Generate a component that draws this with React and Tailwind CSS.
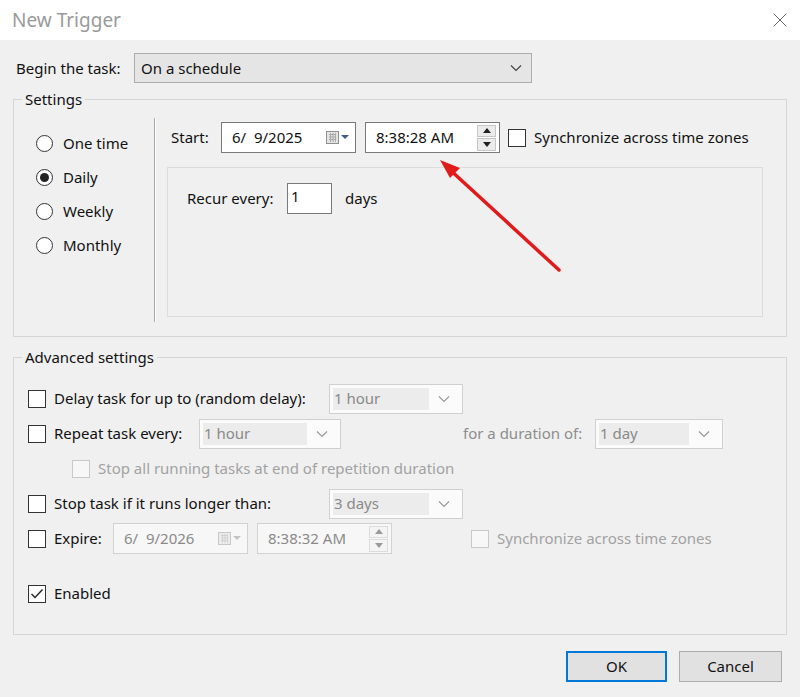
import React from "react";

const font = { fontFamily: '"Noto Sans", "Open Sans", sans-serif' };

const Chevron = ({ color = "#555" }) => (
  <svg width="12" height="8" viewBox="0 0 12 8">
    <path d="M1 1.5 L6 6.5 L11 1.5" fill="none" stroke={color} strokeWidth="1.2" />
  </svg>
);

const CalIcon = ({ dim }) => (
  <svg width="26" height="18" viewBox="0 0 26 18">
    <rect x="1.5" y="2.5" width="12" height="12" fill={dim ? "#ececec" : "#e4e4e4"} stroke={dim ? "#c8c8c8" : "#8f8f8f"} />
    <path d="M4 5.5h7M4 8h7M4 10.5h7M5.5 4v9M8 4v9M10.5 4v9" stroke={dim ? "#d2d2d2" : "#a9a9a9"} strokeWidth="1" />
    <path d="M16 6 L24 6 L20 10 Z" fill={dim ? "#c4c4c4" : "#3d5f8a"} />
  </svg>
);

const Spinner = ({ dim }) => (
  <div className="flex flex-col w-[19px] h-[26px] gap-[1px]">
    <div className={`flex-1 flex items-center justify-center border ${dim ? "border-[#dcdcdc] bg-[#f4f4f4]" : "border-[#c6c6c6] bg-[#ececec]"}`}>
      <svg width="8" height="5" viewBox="0 0 8 5"><path d="M0 5 L4 0 L8 5 Z" fill={dim ? "#9a9a9a" : "#222"} /></svg>
    </div>
    <div className={`flex-1 flex items-center justify-center border ${dim ? "border-[#dcdcdc] bg-[#f4f4f4]" : "border-[#c6c6c6] bg-[#ececec]"}`}>
      <svg width="8" height="5" viewBox="0 0 8 5"><path d="M0 0 L4 5 L8 0 Z" fill={dim ? "#9a9a9a" : "#222"} /></svg>
    </div>
  </div>
);

const Checkbox = ({ checked, dim }) => (
  <div className={`w-[18px] h-[18px] border flex items-center justify-center shrink-0 ${dim ? "border-[#c9c9c9] bg-[#f7f7f7]" : "border-[#333] bg-white"}`}>
    {checked && (
      <svg width="14" height="12" viewBox="0 0 14 12">
        <path d="M1.5 6 L5 9.5 L12.5 1.5" fill="none" stroke="#222" strokeWidth="1.4" />
      </svg>
    )}
  </div>
);

const Radio = ({ checked, label }) => (
  <div className="h-[34px] flex items-center">
    <div className="w-[17px] h-[17px] rounded-full border border-[#333] bg-white flex items-center justify-center">
      {checked && <div className="w-[9px] h-[9px] rounded-full bg-[#222]" />}
    </div>
    <span className="ml-[10px]">{label}</span>
  </div>
);

const Combo = ({ value, w }) => (
  <div className={`${w} h-[30px] border border-[#d0d0d0] bg-[#fbfbfb] flex items-center p-[3px]`}>
    <div className="flex-1 h-full bg-[#ececec] text-[#8a8a8a] flex items-center pl-[1px]">{value}</div>
    <div className="w-[30px] flex justify-center"><Chevron color="#9a9a9a" /></div>
  </div>
);

const DateBox = ({ value, dim }) => (
  <div className={`w-[135px] h-[31px] border flex items-center pl-[10px] pr-[4px] justify-between ${dim ? "border-[#d2d2d2] bg-[#f7f7f7] text-[#8a8a8a]" : "border-[#7a7a7a] bg-white text-[#111]"}`}>
    <span className="whitespace-pre">{value}</span>
    <CalIcon dim={dim} />
  </div>
);

const TimeBox = ({ value, dim }) => (
  <div className={`w-[135px] h-[31px] border flex items-center pl-[10px] pr-[3px] justify-between ${dim ? "border-[#d2d2d2] bg-[#f7f7f7] text-[#8a8a8a]" : "border-[#7a7a7a] bg-white text-[#111]"}`}>
    <span>{value}</span>
    <Spinner dim={dim} />
  </div>
);

export default function App() {
  return (
    <div className="relative w-[800px] h-[697px] bg-[#f0f0f0] text-[15px] text-[#111] overflow-hidden" style={font}>
      {/* title bar */}
      <div className="h-[40px] bg-white flex items-center justify-between pl-[12px] pr-[13px]">
        <span className="text-[19px] text-[#9a9a9a]">New Trigger</span>
        <svg width="14" height="14" viewBox="0 0 14 14">
          <path d="M0.5 0.5 L13.5 13.5 M13.5 0.5 L0.5 13.5" stroke="#666" strokeWidth="1" />
        </svg>
      </div>

      <div className="px-[13px] pt-[13px]">
        {/* begin the task */}
        <div className="flex items-center">
          <span className="ml-[3px] w-[118px]">Begin the task:</span>
          <div className="w-[398px] h-[30px] border border-[#adadad] bg-[#e5e5e5] flex items-center justify-between pl-[6px] pr-[9px]">
            <span>On a schedule</span>
            <Chevron color="#444" />
          </div>
        </div>

        {/* settings */}
        <fieldset className="mt-[6px] h-[248px] border border-[#d5d5d5]">
          <legend className="ml-[8px] px-[3px] leading-[20px]">Settings</legend>
          <div className="flex mt-[9px]">
            <div className="w-[140px] pl-[22px] pt-[8px]">
              <Radio label="One time" />
              <Radio label="Daily" checked />
              <Radio label="Weekly" />
              <Radio label="Monthly" />
            </div>
            <div className="w-[2px] h-[204px] bg-[#a8a8a8] border-r border-white" />
            <div className="flex-1 pt-[4px]">
              <div className="flex items-center pl-[15px]">
                <span className="w-[50px]">Start:</span>
                <DateBox value="6/  9/2025" />
                <div className="ml-[9px]"><TimeBox value="8:38:28 AM" /></div>
                <div className="ml-[8px]"><Checkbox /></div>
                <span className="ml-[8px]">Synchronize across time zones</span>
              </div>
              <div className="ml-[11px] mt-[14px] w-[596px] h-[150px] border border-[#dcdcdc] pl-[19px] pt-[15px]">
                <div className="flex items-center">
                  <span className="w-[100px]">Recur every:</span>
                  <div className="w-[45px] h-[31px] border border-[#7a7a7a] bg-white pl-[3px] leading-[24px]">1</div>
                  <span className="ml-[13px]">days</span>
                </div>
              </div>
            </div>
          </div>
        </fieldset>

        {/* advanced settings */}
        <fieldset className="mt-[10px] h-[288px] border border-[#d5d5d5]">
          <legend className="ml-[8px] px-[3px] leading-[20px]">Advanced settings</legend>
          <div className="pt-[14px] pl-[14px]">
            <div className="h-[35px] flex items-center">
              <div className="w-[301px] flex items-center">
                <Checkbox />
                <span className="ml-[8px]">Delay task for up to (random delay):</span>
              </div>
              <Combo value="1 hour" w="w-[134px]" />
            </div>
            <div className="h-[35px] flex items-center">
              <div className="w-[171px] flex items-center">
                <Checkbox />
                <span className="ml-[8px]">Repeat task every:</span>
              </div>
              <Combo value="1 hour" w="w-[142px]" />
              <span className="ml-[122px] w-[132px] text-[#8d8d8d]">for a duration of:</span>
              <Combo value="1 day" w="w-[128px]" />
            </div>
            <div className="h-[35px] flex items-center pl-[44px]">
              <Checkbox dim />
              <span className="ml-[8px] text-[#a2a2a2]">Stop all running tasks at end of repetition duration</span>
            </div>
            <div className="h-[35px] flex items-center">
              <div className="w-[301px] flex items-center">
                <Checkbox />
                <span className="ml-[8px]">Stop task if it runs longer than:</span>
              </div>
              <Combo value="3 days" w="w-[134px]" />
            </div>
            <div className="h-[35px] flex items-center">
              <div className="w-[85px] flex items-center">
                <Checkbox />
                <span className="ml-[8px]">Expire:</span>
              </div>
              <DateBox value="6/  9/2026" dim />
              <div className="ml-[9px]"><TimeBox value="8:38:32 AM" dim /></div>
              <div className="ml-[79px]"><Checkbox dim /></div>
              <span className="ml-[8px] text-[#a2a2a2]">Synchronize across time zones</span>
            </div>
            <div className="h-[35px] mt-[20px] flex items-center">
              <Checkbox checked />
              <span className="ml-[8px]">Enabled</span>
            </div>
          </div>
        </fieldset>

        {/* buttons */}
        <div className="flex justify-end gap-[12px] mt-[16px] pr-[5px]">
          <button className="w-[101px] h-[31px] border-2 border-[#0078d7] bg-[#e1e1e1]">OK</button>
          <button className="w-[103px] h-[31px] border border-[#adadad] bg-[#e1e1e1]">Cancel</button>
        </div>
      </div>

      {/* annotation arrow */}
      <svg className="absolute left-0 top-0 pointer-events-none" width="800" height="697">
        <line x1="559" y1="270" x2="448" y2="168" stroke="#e01b1b" strokeWidth="3.5" strokeLinecap="round" />
        <path d="M440 160 L460 168 L450 178 Z" fill="#e01b1b" />
      </svg>
    </div>
  );
}
